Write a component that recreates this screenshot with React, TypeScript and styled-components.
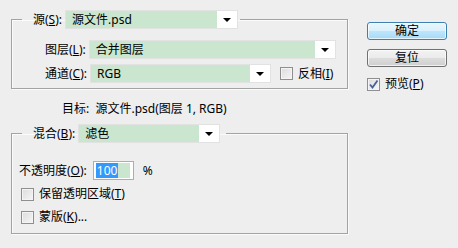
import React from "react";
import styled, { createGlobalStyle } from "styled-components";

const Global = createGlobalStyle`
  html, body { margin: 0; padding: 0; background: #eeeeee; }
  body {
    font-family: "Noto Sans", "Noto Sans CJK SC", sans-serif;
    font-size: 12px;
    color: #000;
  }
`;

const Dialog = styled.div`
  width: 458px;
  height: 248px;
  background: #eeeeee;
  display: flex;
  box-sizing: border-box;
  padding-left: 11px;
`;

const LeftCol = styled.div`
  width: 337px;
  display: flex;
  flex-direction: column;
`;

const RightCol = styled.div`
  margin-left: 19px;
  padding-top: 22px;
  display: flex;
  flex-direction: column;
  width: 80px;
`;

const Group = styled.fieldset<{ $top: number }>`
  margin: ${(p) => p.$top}px 0 0 0;
  padding: 0;
  border: 1px solid #a3a3a3;
  box-shadow: inset 1px 1px 0 #fbfbfb, 1px 1px 0 #fbfbfb;
  width: 337px;
  box-sizing: border-box;
  min-width: 0;
`;

const Legend = styled.legend<{ $padRight: number }>`
  margin-left: 10px;
  padding: 0 ${(p) => p.$padRight}px 0 11px;
  height: 19px;
  display: flex;
  align-items: center;
  gap: 3px;
`;

const Label = styled.span`
  line-height: 16px;
  white-space: nowrap;
`;

const U = styled.span`
  text-decoration: underline;
  text-underline-offset: 1px;
`;

const SelectBox = styled.div<{ $w: number }>`
  width: ${(p) => p.$w}px;
  height: 19px;
  box-sizing: border-box;
  border: 1px solid #e2e2e2;
  background: #ffffff;
  display: flex;
  align-items: stretch;
  flex-shrink: 0;
`;

const SelectField = styled.div`
  flex: 1;
  background: #cae6cf;
  padding-left: 6px;
  display: flex;
  align-items: center;
  line-height: 16px;
  white-space: nowrap;
  overflow: hidden;
`;

const ArrowCell = styled.div`
  width: 20px;
  display: flex;
  align-items: center;
  justify-content: center;
`;

const Arrow = styled.div`
  width: 0;
  height: 0;
  border-left: 4px solid transparent;
  border-right: 4px solid transparent;
  border-top: 4px solid #000;
`;

const GroupBody = styled.div<{ $pt: number; $pb: number; $pl: number }>`
  display: flex;
  flex-direction: column;
  padding: ${(p) => p.$pt}px 0 ${(p) => p.$pb}px ${(p) => p.$pl}px;
`;

const Row = styled.div<{ $gap?: number; $mt?: number }>`
  display: flex;
  align-items: center;
  gap: ${(p) => p.$gap ?? 3}px;
  height: 19px;
  margin-top: ${(p) => p.$mt ?? 0}px;
`;

const CheckRow = styled.label<{ $ml?: number; $mt?: number }>`
  display: flex;
  align-items: center;
  gap: 5px;
  height: 16px;
  margin-left: ${(p) => p.$ml ?? 0}px;
  margin-top: ${(p) => p.$mt ?? 0}px;
`;

const Box = styled.span`
  width: 13px;
  height: 13px;
  box-sizing: border-box;
  border: 1px solid #8e8f8f;
  background: linear-gradient(135deg, #dcdcdc 0%, #f6f6f6 100%);
  box-shadow: inset 0 0 0 1px #f4f4f4;
  display: flex;
  align-items: center;
  justify-content: center;
  flex-shrink: 0;
`;

const Target = styled.div`
  margin-top: 12px;
  padding-left: 51px;
  line-height: 16px;
  height: 16px;
  white-space: nowrap;
`;

const OpacityInput = styled.div`
  width: 41px;
  height: 19px;
  box-sizing: border-box;
  border: 1px solid #abadb3;
  background: #fff;
  padding: 1px 3px 1px 2px;
  display: flex;
  margin-left: 4px;
`;

const InputFill = styled.div`
  flex: 1;
  background: #cae6cf;
  display: flex;
`;

const Sel = styled.span`
  background: #3399ff;
  color: #fff;
  line-height: 15px;
  padding: 0 1px;
`;

const Percent = styled.span`
  margin-left: 7px;
`;

const Button = styled.button<{ $primary?: boolean }>`
  width: 80px;
  height: 18px;
  box-sizing: border-box;
  padding: 0;
  font-family: inherit;
  font-size: 12px;
  line-height: 14px;
  color: #000;
  border-radius: 3px;
  border: 1px solid ${(p) => (p.$primary ? "#3c7fb1" : "#707070")};
  background: ${(p) =>
    p.$primary
      ? "linear-gradient(#eaf6fd 0%, #d9f0fc 50%, #bee6fd 50%, #a7d9f5 100%)"
      : "linear-gradient(#f2f2f2 0%, #ebebeb 50%, #dddddd 50%, #cfcfcf 100%)"};
  box-shadow: inset 0 0 0 1px rgba(255, 255, 255, 0.7);
  margin-bottom: 9px;
`;

const Select = ({ w, children }: { w: number; children: React.ReactNode }) => (
  <SelectBox $w={w}>
    <SelectField>{children}</SelectField>
    <ArrowCell>
      <Arrow />
    </ArrowCell>
  </SelectBox>
);

const Check = ({ checked }: { checked?: boolean }) => (
  <Box>
    {checked && (
      <svg width="11" height="11" viewBox="0 0 11 11">
        <path d="M2 5.5 L4.5 8.5 L9.5 1.5" fill="none" stroke="#4a5f97" strokeWidth="1.8" />
      </svg>
    )}
  </Box>
);

export default function App() {
  return (
    <>
      <Global />
      <Dialog>
        <LeftCol>
          <Group $top={10}>
            <Legend $padRight={2}>
              <Label>
                源(<U>S</U>):
              </Label>
              <Select w={173}>源文件.psd</Select>
            </Legend>
            <GroupBody $pt={11} $pb={5} $pl={33}>
              <Row>
                <Label>
                  图层(<U>L</U>):
                </Label>
                <Select w={247}>合并图层</Select>
              </Row>
              <Row $mt={5}>
                <Label>
                  通道(<U>C</U>):
                </Label>
                <Select w={181}>RGB</Select>
                <CheckRow $ml={6}>
                  <Check />
                  <Label>
                    反相(<U>I</U>)
                  </Label>
                </CheckRow>
              </Row>
            </GroupBody>
          </Group>
          <Target>目标:&nbsp; 源文件.psd(图层 1, RGB)</Target>
          <Group $top={7}>
            <Legend $padRight={6}>
              <Label>
                混合(<U>B</U>):
              </Label>
              <Select w={142}>滤色</Select>
            </Legend>
            <GroupBody $pt={18} $pb={8} $pl={7}>
              <Row $gap={2}>
                <Label>
                  不透明度(<U>O</U>):
                </Label>
                <OpacityInput>
                  <Sel>100</Sel>
                  <InputFill />
                </OpacityInput>
                <Percent>%</Percent>
              </Row>
              <CheckRow $ml={2} $mt={6}>
                <Check />
                <Label>
                  保留透明区域(<U>T</U>)
                </Label>
              </CheckRow>
              <CheckRow $ml={2} $mt={7}>
                <Check />
                <Label>
                  蒙版(<U>K</U>)...
                </Label>
              </CheckRow>
            </GroupBody>
          </Group>
        </LeftCol>
        <RightCol>
          <Button $primary>确定</Button>
          <Button>复位</Button>
          <CheckRow>
            <Check checked />
            <Label>
              预览(<U>P</U>)
            </Label>
          </CheckRow>
        </RightCol>
      </Dialog>
    </>
  );
}
